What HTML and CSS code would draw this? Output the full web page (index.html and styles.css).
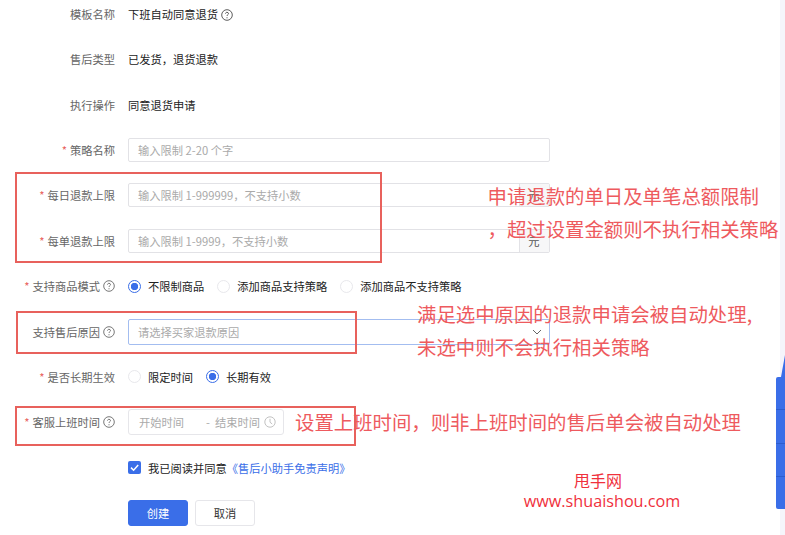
FILE: index.html
```html
<!DOCTYPE html>
<html lang="zh-CN">
<head>
<meta charset="utf-8">
<title>售后小助手</title>
<link rel="stylesheet" href="styles.css">
</head>
<body>
<svg class="defs" width="0" height="0" aria-hidden="true">
  <symbol id="help" viewBox="0 0 12 12">
    <circle cx="6" cy="6" r="5.3" fill="none" stroke="currentColor" stroke-width="0.8"/>
    <path d="M4.5 4.7C4.5 3.8 5.2 3.3 6 3.3S7.5 3.8 7.5 4.6C7.5 5.7 6 5.7 6 7" fill="none" stroke="currentColor" stroke-width="0.8"/>
    <circle cx="6" cy="8.7" r="0.55" fill="currentColor"/>
  </symbol>
</svg>
<div class="page">
  <main class="form">
    <div class="row">
      <div class="label">模板名称</div>
      <div class="value">下班自动同意退货<svg class="help help-value"><use href="#help"/></svg></div>
    </div>
    <div class="row">
      <div class="label">售后类型</div>
      <div class="value">已发货，退货退款</div>
    </div>
    <div class="row">
      <div class="label">执行操作</div>
      <div class="value">同意退货申请</div>
    </div>
    <div class="row">
      <div class="label"><span class="req">*</span>策略名称</div>
      <div class="input">输入限制 2-20 个字</div>
    </div>
    <div class="row">
      <div class="label"><span class="req">*</span>每日退款上限</div>
      <div class="input has-addon"><span class="input-text">输入限制 1-999999，不支持小数</span><span class="addon">元</span></div>
    </div>
    <div class="row">
      <div class="label"><span class="req">*</span>每单退款上限</div>
      <div class="input has-addon"><span class="input-text">输入限制 1-9999，不支持小数</span><span class="addon">元</span></div>
    </div>
    <div class="row">
      <div class="label"><span class="req">*</span>支持商品模式<svg class="help"><use href="#help"/></svg></div>
      <div class="radios">
        <span class="radio-item"><span class="radio on"></span>不限制商品</span>
        <span class="radio-item"><span class="radio"></span>添加商品支持策略</span>
        <span class="radio-item"><span class="radio"></span>添加商品不支持策略</span>
      </div>
    </div>
    <div class="row">
      <div class="label">支持售后原因<svg class="help"><use href="#help"/></svg></div>
      <div class="input select"><span class="input-text">请选择买家退款原因</span>
        <svg class="chevron" viewBox="0 0 10 6"><path d="M1 1l4 4 4-4" fill="none" stroke="#666" stroke-width="1"/></svg>
      </div>
    </div>
    <div class="row">
      <div class="label"><span class="req">*</span>是否长期生效</div>
      <div class="radios">
        <span class="radio-item"><span class="radio"></span>限定时间</span>
        <span class="radio-item"><span class="radio on"></span>长期有效</span>
      </div>
    </div>
    <div class="row">
      <div class="label"><span class="req">*</span>客服上班时间<svg class="help"><use href="#help"/></svg></div>
      <div class="range">
        <span class="range-start">开始时间</span><span class="range-sep">-</span><span class="range-end">结束时间</span>
        <svg class="clock" viewBox="0 0 12 12"><circle cx="6" cy="6" r="5.2" fill="none" stroke="#bbb" stroke-width="0.9"/><path d="M6 2.8V6.2L8.2 8" fill="none" stroke="#bbb" stroke-width="0.9"/></svg>
      </div>
    </div>
    <div class="row">
      <div class="label"></div>
      <div class="agree">
        <span class="check"><svg viewBox="0 0 13 13"><path d="M3 6.6l2.6 2.6L10.2 4" fill="none" stroke="#fff" stroke-width="1.5"/></svg></span>
        我已阅读并同意<a class="link">《售后小助手免责声明》</a>
      </div>
    </div>
    <div class="row">
      <div class="label"></div>
      <div class="buttons">
        <span class="btn primary">创建</span>
        <span class="btn">取消</span>
      </div>
    </div>
  </main>
  <aside class="strip"></aside>
</div>

<div class="mark box-limit"></div>
<div class="mark box-reason"></div>
<div class="mark box-time"></div>

<div class="note note-1">申请退款的单日及单笔总额限制</div>
<div class="note note-2">，超过设置金额则不执行相关策略</div>
<div class="note note-3">满足选中原因的退款申请会被自动处理,</div>
<div class="note note-4">未选中则不会执行相关策略</div>
<div class="note note-5">设置上班时间，则非上班时间的售后单会被自动处理</div>

<div class="watermark">
  <div class="watermark-name">甩手网</div>
  <div class="watermark-url">www.shuaishou.com</div>
</div>

<div class="float-tip"></div>
<div class="float-bar"><i></i><i></i><i></i><i></i></div>
</body>
</html>
```
FILE: styles.css
```css
* { box-sizing: border-box; }
html, body { margin: 0; height: 100%; overflow: hidden; background: #fff; }
body {
  position: relative;
  font-family: "Noto Sans CJK SC", "Liberation Sans", sans-serif;
  font-size: 11.25px;
  color: #222;
}
.defs { position: absolute; }
.page { display: flex; height: 535px; }
.form {
  flex: 1;
  display: flex;
  flex-direction: column;
  gap: 19.4px;
  padding-top: 0.8px;
}
.strip { width: 5px; background: #f5f5fb; }
.row { display: flex; align-items: center; gap: 13px; height: 26px; }
.label {
  width: 115px;
  display: flex;
  justify-content: flex-end;
  align-items: center;
  color: #666;
  white-space: nowrap;
}
.req { color: #e8615c; margin-right: 3px; }
.help { width: 12px; height: 12px; margin-left: 3px; color: #555; flex: none; }
.help-value { color: #333; margin-left: 3px; vertical-align: -2px; }
.value { white-space: nowrap; }
.input {
  width: 421.5px;
  height: 24px;
  border: 1px solid #e2e2e6;
  border-radius: 2px;
  padding-left: 9px;
  display: flex;
  align-items: center;
  color: #aaa;
  background: #fff;
}
.input-text { flex: 1; }
.has-addon { padding-right: 0; }
.addon {
  width: 30px;
  height: 100%;
  display: flex;
  align-items: center;
  justify-content: center;
  color: #555;
  background: #f7f7f8;
  border-left: 1px solid #e2e2e6;
}
.select { height: 26px; border-color: #a3bdf0; padding-right: 7px; }
.chevron { width: 10px; height: 6px; }
.radios { display: flex; gap: 13px; white-space: nowrap; }
.radio-item { display: flex; align-items: center; gap: 7px; }
.radio {
  width: 13px;
  height: 13px;
  border-radius: 50%;
  border: 1px solid #e8e8ec;
  background: #fff;
  flex: none;
}
.radio.on {
  border-color: #3a6ee8;
  background: radial-gradient(circle, #3a6ee8 0 3.4px, #fff 4px);
}
.range {
  width: 156px;
  height: 26px;
  border: 1px solid #e6e6ea;
  border-radius: 3px;
  display: flex;
  align-items: center;
  color: #aaa;
  padding: 0 7px 0 10px;
  white-space: nowrap;
}
.range-start { width: 67px; }
.range-sep { width: 9px; }
.range-end { flex: 1; }
.clock { width: 12px; height: 12px; flex: none; }
.agree { display: flex; align-items: center; white-space: nowrap; }
.check {
  width: 13px;
  height: 13px;
  border-radius: 2px;
  background: #3a6ee8;
  margin-right: 7px;
  display: flex;
}
.link { color: #3a6ee8; }
.buttons { display: flex; gap: 7px; }
.btn {
  width: 60px;
  height: 26px;
  border: 1px solid #e6e6ea;
  border-radius: 3px;
  display: flex;
  align-items: center;
  justify-content: center;
  background: #fff;
  color: #333;
}
.btn.primary { background: #3a6ee8; border-color: #3a6ee8; color: #fff; }

.mark { position: absolute; border: 2px solid #e8615c; }
.box-limit { left: 15px; top: 172px; width: 367px; height: 91px; }
.box-reason { left: 16px; top: 311px; width: 341px; height: 43px; }
.box-time { left: 15px; top: 406px; width: 341px; height: 40px; }

.note {
  position: absolute;
  font-size: 19.4px;
  line-height: 26px;
  color: #ee5a5e;
  white-space: nowrap;
}
.note-1 { left: 487.5px; top: 183px; }
.note-2 { left: 487.5px; top: 216px; }
.note-3 { left: 417px; top: 301px; }
.note-4 { left: 417px; top: 334px; }
.note-5 { left: 295px; top: 409px; }

.watermark {
  position: absolute;
  left: 500px;
  top: 470px;
  width: 204px;
  text-align: center;
  line-height: 21px;
  color: #f0303c;
}
.watermark-name { font-size: 16px; padding-right: 8px; }
.watermark-url { font-family: "Open Sans", "Noto Sans", sans-serif; font-size: 16.2px; }

.float-bar {
  position: absolute;
  left: 776px;
  top: 377px;
  width: 9px;
  height: 132px;
  background: #3a6ee8;
  border-radius: 2px 0 0 2px;
  display: flex;
  flex-direction: column;
}
.float-bar i { flex: 1; border-bottom: 1px solid #2c5dcf; }
.float-bar i:last-child { border-bottom: 0; }
.float-tip {
  position: absolute;
  left: 781px;
  top: 355px;
  width: 4px;
  height: 22px;
  background: #3a6ee8;
  clip-path: polygon(100% 0, 100% 100%, 0 100%);
}
```
